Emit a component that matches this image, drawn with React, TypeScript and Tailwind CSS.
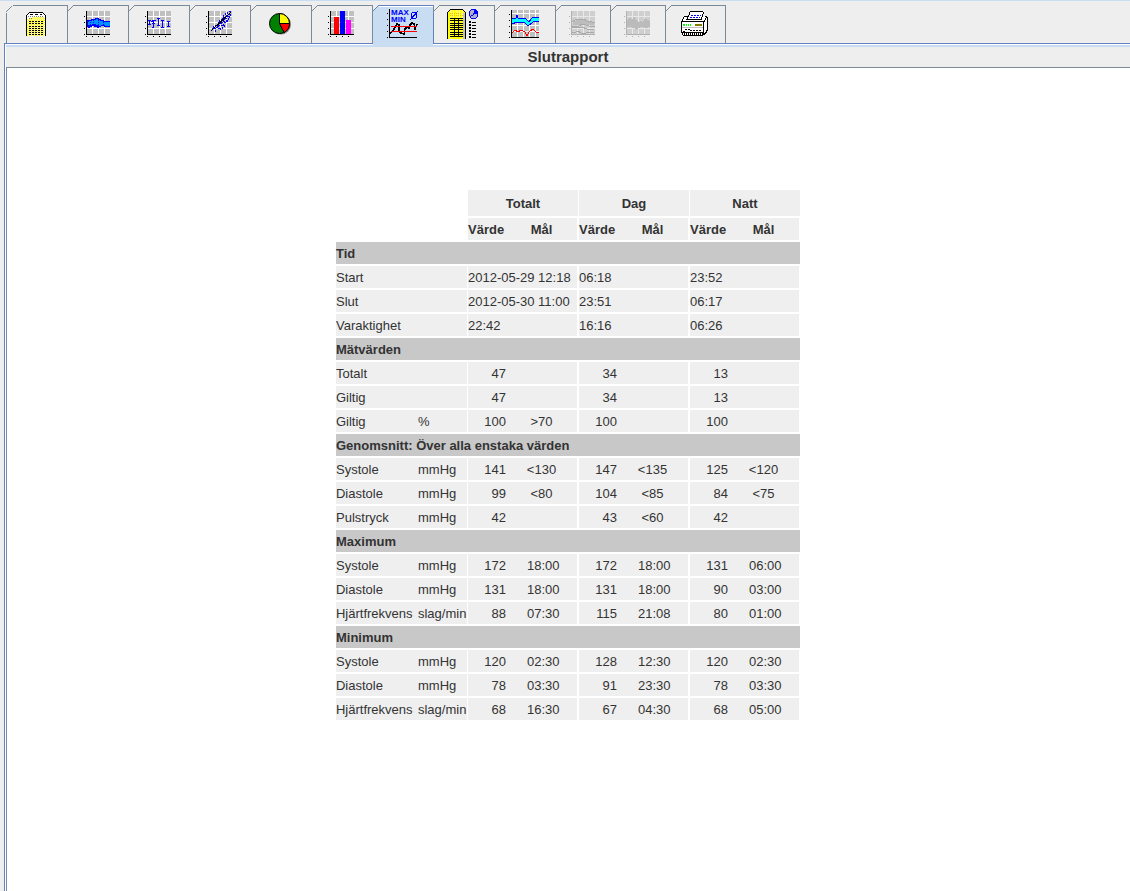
import type { ReactNode } from "react";

const BLUE = "#0000ff";

function Grid({ ink = "#000", tile = "#c0c0c0", line = "#fff", children }: { ink?: string; tile?: string; line?: string; children?: ReactNode }) {
  const steps = [0, 1, 2, 3];
  return (
    <svg width="28" height="26" viewBox="0 0 28 26" shapeRendering="crispEdges" aria-hidden="true">
      <rect x="3" y="0" width="23" height="23" fill={line} />
      {steps.map((r) => steps.map((c) => <rect key={`${r}${c}`} x={3 + c * 6} y={r * 6} width="5" height="5" fill={tile} />))}
      {children}
      <rect x="2" y="0" width="1" height="24" fill={ink} />
      <rect x="2" y="23" width="24" height="1" fill={ink} />
      {steps.map((i) => (
        <g key={i} fill={ink}>
          <rect x="0" y={5 + i * 6} width="1" height="1" />
          <rect x={2 + i * 6} y="25" width="1" height="1" />
        </g>
      ))}
    </svg>
  );
}

function TableIcon() {
  return (
    <svg width="22" height="26" viewBox="0 0 22 26" shapeRendering="crispEdges" aria-hidden="true">
      <defs>
        <pattern id="dither" width="2" height="2" patternUnits="userSpaceOnUse">
          <rect width="2" height="2" fill="#ffff00" />
          <rect width="1" height="1" fill="#fff" />
          <rect x="1" y="1" width="1" height="1" fill="#fff6a0" />
        </pattern>
      </defs>
      <path d="M1 4h1V3h1V2h14v1h1v1h1v21H1z" fill="#fff" />
      <path d="M1 8h2V7h3V6h13v19H1z" fill="url(#dither)" />
      <path d="M0 4h1v21H0zM19 4h1v21h-1zM1 3h1v1H1zM2 2h1v1H2zM3 1h14v1H3zM17 2h1v1h-1zM18 3h1v1h-1z" fill="#000" />
      <path d="M4 3.5h12" stroke="#000" strokeDasharray="3 2" />
      <path d="M2 5.5h16M3 7.5h3" stroke="#808080" strokeDasharray="1 1" />
      {[10, 12, 15, 17, 19, 21, 23].map((y) => (
        <path key={y} d={`M3 ${y + 0.5}h14`} stroke="#000" strokeDasharray="2 1" />
      ))}
    </svg>
  );
}

function BandIcon() {
  return (
    <Grid>
      <path d="M3 9h4V8h4V7h4v1h2v1h3v1h6v6h-6v-1h-3v1h-2v1h-2v-1h-3v-1H8v1H6v1H4v-1H3z" fill={BLUE} />
      <path d="M4 11h1v-1h3V9h4V8h2v1h2v1h3v1h7v4h-5v-1h-4v1h-2v-1h-3v-1H8v1H4z" fill="#0090ff" />
      <path d="M9.500 9v4M14.500 9v5M6.500 11v3M19.500 11v3" stroke={BLUE} strokeDasharray="1 1" />
    </Grid>
  );
}

function ErrorBarIcon() {
  return (
    <Grid>
      <path
        d="M4.500 9v5M3 9.500h3M3 13.500h3M8.500 9v8M7 9.500h4M7 12.500h3M6 10.500h2M7 16.500h2M13.500 7v8M12 7.500h3M12 14.500h3M17.500 9v8M16 9.500h3M16 16.500h3M23.500 10v6M22 10.500h3M22 15.500h3"
        stroke={BLUE}
        fill="none"
      />
    </Grid>
  );
}

const DOTS = [
  [6, 17, 1], [8, 17, 2], [7, 15, 1], [9, 14, 2], [9, 19, 1], [11, 13, 1], [12, 17, 2], [12, 11, 1], [11, 15, 2], [13, 9, 1], [13, 12, 2],
  [14, 10, 1], [15, 14, 2], [14, 17, 1], [15, 8, 1], [15, 11, 2], [17, 6, 1], [16, 9, 2], [17, 13, 1], [17, 4, 1], [18, 7, 1], [18, 11, 2],
  [18, 14, 1], [19, 5, 1], [20, 9, 1], [19, 2, 1], [20, 4, 2], [21, 1, 1], [22, 7, 1], [21, 9, 1], [23, 0, 2], [23, 5, 1], [24, 3, 1], [16, 16, 1],
  [12, 14, 2], [14, 12, 2], [17, 10, 2], [19, 7, 2], [21, 5, 2], [22, 3, 2], [10, 16, 2], [16, 7, 2],
];

function ScatterIcon() {
  return (
    <Grid>
      {DOTS.map(([x, y, w]) => (
        <rect key={`${x}-${y}`} x={x} y={y} width={w} height={3 - w} fill={BLUE} />
      ))}
      <path d="M5 20L25 1" stroke="#000" />
    </Grid>
  );
}

function PieIcon() {
  return (
    <svg width="24" height="26" viewBox="0 0 24 26" aria-hidden="true">
      <circle cx="12" cy="13.500" r="10" fill="#808080" />
      <circle cx="10.500" cy="12.500" r="10" fill="#008000" stroke="#000" />
      <path d="M10.500 12.500V2.500a10 10 0 0 1 10 10z" fill="#ffff00" stroke="#000" />
      <path d="M10.500 12.500h10a10 10 0 0 1-5.500 9z" fill="#ff0000" stroke="#000" />
    </svg>
  );
}

function BarsIcon() {
  return (
    <Grid>
      <rect x="6" y="6" width="5" height="17" fill="#ff0000" />
      <rect x="12" y="0" width="5" height="23" fill={BLUE} />
      <rect x="18" y="9" width="5" height="14" fill="#ff00ff" />
    </Grid>
  );
}

function MaxMinIcon() {
  return (
    <svg width="32" height="30" viewBox="0 0 32 30" shapeRendering="crispEdges" aria-hidden="true">
      <g fill={BLUE} fontFamily="Liberation Sans, Arial, sans-serif" fontSize="8" fontWeight="bold">
        <text x="4" y="6">MAX</text>
        <text x="4" y="13">MIN</text>
      </g>
      <path d="M25 3.500h4M24.500 4v5M25 9.500h4M29.500 4v5M23 11L31 2" stroke={BLUE} fill="none" />
      <path d="M3 24L6 22L8 18L10 15L12 16L12 22L14 24L17 25L18 20L20 18L22 19L23 16L25 14L27 15L28 20L30 15" stroke="#000" strokeWidth="1.500" fill="none" />
      <path d="M4 17.500h26M4 22.500h26" stroke="#ff0000" />
      <path d="M2 0h1v28h27v1H2z" fill="#000" />
      {[4, 10, 16, 22, 28].map((y) => (
        <rect key={y} x="0" y={y} width="1" height="1" fill="#000" />
      ))}
    </svg>
  );
}

function ReportIcon() {
  return (
    <svg width="34" height="30" viewBox="0 0 34 30" shapeRendering="crispEdges" aria-hidden="true">
      <path d="M1 3h1V2h1V1h13v1h1v1h1v27H1z" fill="#ffff00" />
      <path d="M3.500 1v29M6.500 1v8M9.500 1v8M12.500 1v8M15.500 1v8" stroke="#fff6a0" />
      <path d="M3 4.500h12M3 6.500h13" stroke="#e0c000" strokeDasharray="1 1" />
      <path d="M16 4h2v26h-2z" fill="#c0c0c0" />
      <path d="M0 3h1v27H0zM1 2h1v1H1zM2 1h1v1H2zM3 0h13v1H3zM16 1h1v1h-1zM17 2h1v1h-1zM18 3h1v27h-1z" fill="#000" />
      {[9, 11, 14, 16, 18, 20, 23, 25, 27].map((y) => (
        <path key={y} d={`M3 ${y + 0.5}h13`} stroke="#000" />
      ))}
      <path d="M7.500 9v19M11.500 9v19" stroke="#000" />
      <path d="M24 1h5v1h1v1h1v5h-1v1h-1v1h-5V9h-1V8h-1V3h1V2h1z" fill="#b0b0c8" />
      <path d="M24 .5h5M23.500 1v1M22.500 2v5M23.500 7v2M24 9.500h5M29.500 8v1M30.500 2v6M29.500 1v1" stroke={BLUE} />
      <path d="M27 1h2v1h1v3h-3z" fill={BLUE} />
      <path d="M26.500 4v2M24 6.500h2" stroke={BLUE} />
      {[12, 15, 18, 21, 24, 27].map((y) => (
        <path key={y} d={`M22 ${y}h2v2h-2zM25 ${y + 1}h4v1h-4z`} fill="#000" />
      ))}
    </svg>
  );
}

function TrendIcon() {
  const steps = [0, 1, 2, 3, 4];
  return (
    <svg width="32" height="30" viewBox="0 0 32 30" shapeRendering="crispEdges" aria-hidden="true">
      <rect x="3" y="1" width="27" height="27" fill="#fff" />
      {steps.map((r) => steps.map((c) => (
        <rect key={`${r}${c}`} x={3 + c * 6} y={r === 0 ? 1 : r * 6 - 1} width={c === 4 ? 3 : 5} height={r === 0 ? 3 : 5} fill="#c0c0c0" />
      )))}
      <path d="M3 9L7 9L8 6L9 9L16 9L20 13L23 9L26 8L30 9V12L24 13L19 17L16 14L8 13L3 15z" fill="#00ffff" />
      <path d="M3 9L7 9L8 6L9 9L16 9L20 13L23 9L26 8L30 9M30 12L24 13L19 17L16 14L8 13L3 15" stroke={BLUE} fill="none" />
      <path d="M3 24L6 21L9 23L12 21L16 23L18 27L20 23L24 20L27 23L30 23" stroke="#ff0000" fill="none" />
      <path d="M2 1h1v27h27v1H2z" fill="#000" />
      {[5, 11, 17, 23, 28].map((y) => (
        <rect key={y} x="0" y={y} width="1" height="1" fill="#000" />
      ))}
    </svg>
  );
}

function DisabledBandIcon() {
  return (
    <Grid ink="#b0b0b0" tile="#cfcfcf" line="#e8e8e8">
      <path d="M4 10l5-1 6 0 4 2h6v3H4z" fill="#bdbdbd" />
      <path d="M3 11l3-2 4-1h5l3 2 5 1 3 0M3 15h7l3-2 4 1 3 1h6M3 16l6 1 4-1 5 2h7M3 21h4l2-1 3 2h5l2-1h6" stroke="#aaa" fill="none" />
    </Grid>
  );
}

function DisabledAreaIcon() {
  return (
    <Grid ink="#b0b0b0" tile="#cfcfcf" line="#e8e8e8">
      <path d="M3 9l3-2 2 2 2-4 2 4 2 2 3-1 2 1 3-5 1 3 3 1v6l-5 1-3-1-4 1-2 2-2-2-4-1-3 0z" fill="#bbb" />
    </Grid>
  );
}

function PrinterIcon() {
  return (
    <svg width="29" height="26" viewBox="0 0 29 26" shapeRendering="crispEdges" aria-hidden="true">
      <path d="M0 11L4 5h20l2 2v12l-4 6H1L0 21z" fill="#fff" />
      <path d="M3 5h4M2 6h1v2H2zM1 8h1v2H1zM24 5h2v1h1v14h-1v2h-1v1h-1v1h-1v-5h-1v-8h1V9h1V7h1V6h-1z" fill="#000" />
      <path d="M23 11h1V9h1V7h1v12h-1v2h-1v1h-1z" fill="#fff" />
      <path d="M9 0h14v2h-1v3h-1v3H6V6h1V4h1V2h1z" fill="#fff" />
      <path d="M9 .5h13M8.500 1v3M7.500 4v2M6.500 6v2M22.500 1v2M21.500 3v3M20.500 6v2M5 8.500h16M3 5.500h4M2.500 6v2M1.500 8v2" stroke="#000" />
      <path d="M10 4.500h10M9 6.500h10" stroke={BLUE} strokeDasharray="2 1" />
      <path d="M0 10.500h23M.5 11v11M22.500 11v13M24.500 8v1M23.500 9v1" stroke="#000" />
      <path d="M2 13h2v2H2zM5 13h1v2H5zM7 13h1v2H7zM9 13h1v2H9z" fill="#00ff00" />
      <path d="M14 13h7v2h-7z" fill="#808000" />
      <path d="M1 16.500h21" stroke="#c0c0c0" />
      <path d="M2 20.500h3M4 18.500h5M9 19.500h12" stroke="#000" strokeDasharray="2 1" />
      <path d="M1 21.500h22M2 24.500h20" stroke="#000" />
      <path d="M1 23h22" stroke="#000" strokeWidth="2" strokeDasharray="1 1" />
    </svg>
  );
}

type TabDef = { label: string; icon: ReactNode; width: string; disabled?: boolean; selected?: boolean };

const TABS: TabDef[] = [
  { label: "Tabell", icon: <TableIcon />, width: "w-[62px] border-l" },
  { label: "Kurva", icon: <BandIcon />, width: "w-[61px]" },
  { label: "Staplar", icon: <ErrorBarIcon />, width: "w-[61px]" },
  { label: "Korrelation", icon: <ScatterIcon />, width: "w-[61px]" },
  { label: "Cirkeldiagram", icon: <PieIcon />, width: "w-[61px]" },
  { label: "Histogram", icon: <BarsIcon />, width: "w-[61px]" },
  { label: "Slutrapport", icon: <MaxMinIcon />, width: "w-[61px]", selected: true },
  { label: "Timmedelvärden", icon: <ReportIcon />, width: "w-[61px]" },
  { label: "Trend", icon: <TrendIcon />, width: "w-[61px]" },
  { label: "Jämförelse", icon: <DisabledBandIcon />, width: "w-[55px]", disabled: true },
  { label: "Profil", icon: <DisabledAreaIcon />, width: "w-[55px]", disabled: true },
  { label: "Skriv ut", icon: <PrinterIcon />, width: "w-[60px]" },
];

function Tab({ tab }: { tab: TabDef }) {
  const tone = tab.selected
    ? "border-[#6382bf] bg-[#c8ddf2] before:bg-[#6382bf] after:absolute after:inset-x-0 after:top-full after:h-1 after:bg-[#c8ddf2]"
    : "border-[#7a8a99] before:bg-[#7a8a99]";
  return (
    <button
      type="button"
      role="tab"
      aria-label={tab.label}
      aria-selected={!!tab.selected}
      disabled={tab.disabled}
      className={`relative flex h-[38px] items-center justify-center border-r before:absolute before:top-0 before:right-0 before:left-1.5 before:h-px ${tab.width} ${tone}`}
    >
      <svg className="absolute top-0 -left-px" width="8" height="8" viewBox="-1 0 8 8" shapeRendering="crispEdges" aria-hidden="true">
        <path d="M-1 0h7L0 6v2h-1z" fill="#eee" />
        <path d={tab.width.includes("border-l") ? "M5 1L-1 7" : "M6 0L0 6"} stroke={tab.selected ? "#6382bf" : "#7a8a99"} />
        {!tab.width.includes("border-l") && <path d="M-.5 0v8" stroke="#7a8a99" />}
      </svg>
      {tab.selected && <span className="absolute top-px right-0 left-1.5 h-px bg-white" />}
      {tab.icon}
    </button>
  );
}

type Cell = [value: string, target?: string];
type Row = { name: string; unit?: string; cells: [Cell, Cell, Cell] };
type Section = { title: string; kind: "time" | "number"; rows: Row[] };

const SECTIONS: Section[] = [
  {
    title: "Tid",
    kind: "time",
    rows: [
      { name: "Start", cells: [["2012-05-29 12:18"], ["06:18"], ["23:52"]] },
      { name: "Slut", cells: [["2012-05-30 11:00"], ["23:51"], ["06:17"]] },
      { name: "Varaktighet", cells: [["22:42"], ["16:16"], ["06:26"]] },
    ],
  },
  {
    title: "Mätvärden",
    kind: "number",
    rows: [
      { name: "Totalt", cells: [["47"], ["34"], ["13"]] },
      { name: "Giltig", cells: [["47"], ["34"], ["13"]] },
      { name: "Giltig", unit: "%", cells: [["100", ">70"], ["100"], ["100"]] },
    ],
  },
  {
    title: "Genomsnitt: Över alla enstaka värden",
    kind: "number",
    rows: [
      { name: "Systole", unit: "mmHg", cells: [["141", "<130"], ["147", "<135"], ["125", "<120"]] },
      { name: "Diastole", unit: "mmHg", cells: [["99", "<80"], ["104", "<85"], ["84", "<75"]] },
      { name: "Pulstryck", unit: "mmHg", cells: [["42"], ["43", "<60"], ["42"]] },
    ],
  },
  {
    title: "Maximum",
    kind: "number",
    rows: [
      { name: "Systole", unit: "mmHg", cells: [["172", "18:00"], ["172", "18:00"], ["131", "06:00"]] },
      { name: "Diastole", unit: "mmHg", cells: [["131", "18:00"], ["131", "18:00"], ["90", "03:00"]] },
      { name: "Hjärtfrekvens", unit: "slag/min", cells: [["88", "07:30"], ["115", "21:08"], ["80", "01:00"]] },
    ],
  },
  {
    title: "Minimum",
    kind: "number",
    rows: [
      { name: "Systole", unit: "mmHg", cells: [["120", "02:30"], ["128", "12:30"], ["120", "02:30"]] },
      { name: "Diastole", unit: "mmHg", cells: [["78", "03:30"], ["91", "23:30"], ["78", "03:30"]] },
      { name: "Hjärtfrekvens", unit: "slag/min", cells: [["68", "16:30"], ["67", "04:30"], ["68", "05:00"]] },
    ],
  },
];

const PERIODS = ["Totalt", "Dag", "Natt"];
const BASE = "border-b-2 border-white bg-[#efefef] px-0 pt-0.5 pb-0";

function DataRow({ row, kind }: { row: Row; kind: Section["kind"] }) {
  return (
    <tr className="h-6">
      <th scope="row" className={`${BASE} text-left font-normal`}>{row.name}</th>
      <td className={`${BASE} border-r`}>{row.unit}</td>
      {row.cells.map(([value, target], i) =>
        kind === "time" ? (
          <td key={i} colSpan={2} className={`${BASE} border-r-2`}>{value}</td>
        ) : (
          [
            <td key={`v${i}`} className={`${BASE} text-right`}>{value}</td>,
            <td key={`t${i}`} className={`${BASE} border-r-2 ${target?.includes(":") ? "pl-[21px] text-left" : "text-center"}`}>{target}</td>,
          ]
        ),
      )}
    </tr>
  );
}

function ReportTable() {
  return (
    <table className="table-fixed w-[465px] border-separate border-spacing-0 text-[13px] leading-5 whitespace-nowrap">
      <colgroup>
        <col className="w-[82px]" />
        <col className="w-[50px]" />
        {PERIODS.map((p) => [<col key={`${p}v`} className="w-[38px]" />, <col key={`${p}m`} className="w-[73px]" />])}
      </colgroup>
      <thead>
        <tr className="h-7">
          <td colSpan={2} />
          {PERIODS.map((p) => (
            <th key={p} scope="colgroup" colSpan={2} className={`${BASE} border-r text-center font-bold`}>{p}</th>
          ))}
        </tr>
        <tr className="h-6">
          <td colSpan={2} />
          {PERIODS.map((p) => [
            <th key={`${p}v`} scope="col" className={`${BASE} text-left font-bold`}>Värde</th>,
            <th key={`${p}m`} scope="col" className={`${BASE} border-r-2 text-center font-bold`}>Mål</th>,
          ])}
        </tr>
      </thead>
      {SECTIONS.map((s) => (
        <tbody key={s.title}>
          <tr className="h-6">
            <th scope="rowgroup" colSpan={8} className="border-r border-b-2 border-white bg-[#c8c8c8] px-0 pt-0.5 pb-0 text-left font-bold">{s.title}</th>
          </tr>
          {s.rows.map((r, i) => (
            <DataRow key={i} row={r} kind={s.kind} />
          ))}
        </tbody>
      ))}
    </table>
  );
}

export default function App() {
  return (
    <div className="flex min-h-screen flex-col border-t border-[#c8ddf2] bg-[#eee] font-['Liberation_Sans',Arial,sans-serif] text-[#333]">
      <nav role="tablist" aria-label="Vyer" className="z-10 flex pt-1 pl-1.5">
        {TABS.map((t) => (
          <Tab key={t.label} tab={t} />
        ))}
      </nav>
      <main className="ml-1 flex grow flex-col border-t border-l border-[#6382bf]">
        <div className="flex grow flex-col border-t border-l border-white">
          <h1 className="border-t-2 border-[#c8ddf2] text-center text-[15px] leading-5 font-bold">Slutrapport</h1>
          <section className="flex grow flex-col items-center border-t border-l border-[#7a8a99] bg-white pt-[122px]">
            <ReportTable />
          </section>
        </div>
      </main>
    </div>
  );
}
